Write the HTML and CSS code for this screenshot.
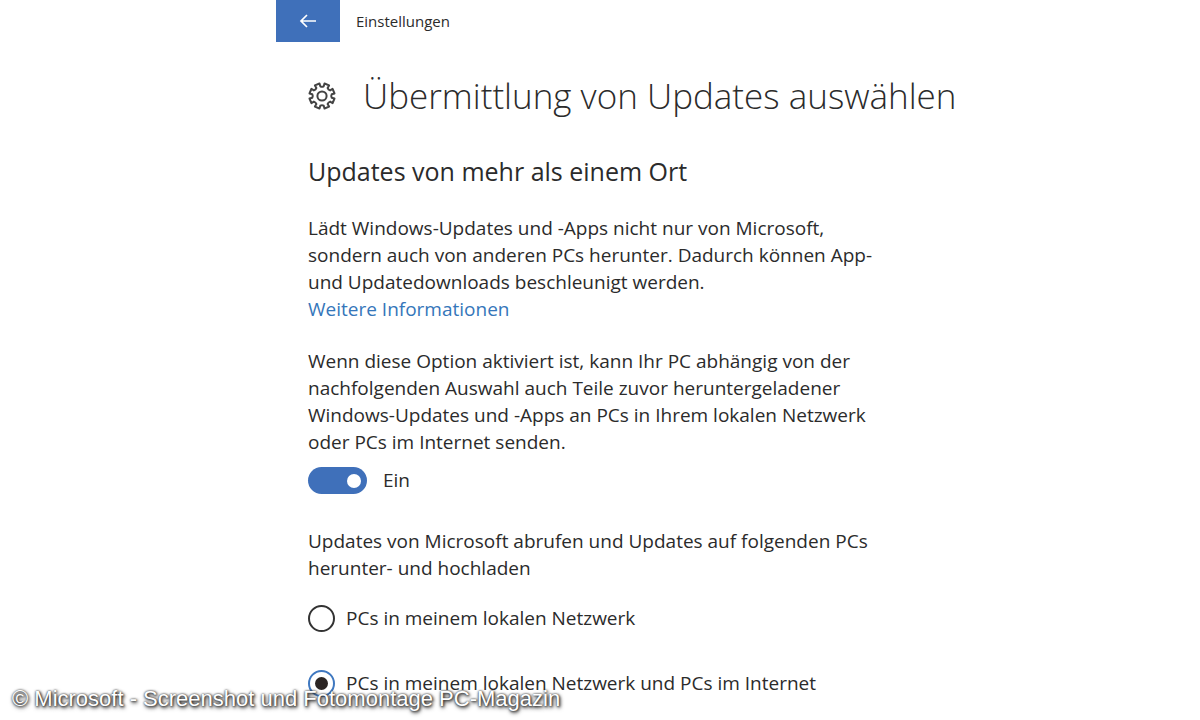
FILE: index.html
```html
<!DOCTYPE html>
<html lang="de">
<head>
<meta charset="utf-8">
<title>Einstellungen</title>
<link rel="stylesheet" href="styles.css">
</head>
<body>
<div class="window">
  <header class="titlebar">
    <button class="back" type="button" aria-label="Zurück">
      <svg width="18" height="16" viewBox="0 0 18 16" fill="none" stroke="currentColor" stroke-width="1.7"><path d="M17 8H2M8 2L2 8l6 6"/></svg>
    </button>
    <span class="app-name">Einstellungen</span>
  </header>
  <main class="content">
    <div class="heading">
      <svg class="gear" width="28" height="28" viewBox="0 0 28 28" fill="none" stroke="currentColor" stroke-width="2" stroke-linejoin="round"><path d="M11.5 1.5L12.3 4.3Q14 5.2 15.7 4.3L16.5 1.5L21.1 3.4L19.6 5.9Q20.2 7.8 22.1 8.4L24.6 6.9L26.5 11.5L23.7 12.3Q22.8 14 23.7 15.7L26.5 16.5L24.6 21.1L22.1 19.6Q20.2 20.2 19.6 22.1L21.1 24.6L16.5 26.5L15.7 23.7Q14 22.8 12.3 23.7L11.5 26.5L6.9 24.6L8.4 22.1Q7.8 20.2 5.9 19.6L3.4 21.1L1.5 16.5L4.3 15.7Q5.2 14 4.3 12.3L1.5 11.5L3.4 6.9L5.9 8.4Q7.8 7.8 8.4 5.9L6.9 3.4Z"/><circle cx="14" cy="14" r="4.6"/></svg>
      <h1>Übermittlung von Updates auswählen</h1>
    </div>
    <h2>Updates von mehr als einem Ort</h2>
    <p>Lädt Windows-Updates und -Apps nicht nur von Microsoft,<br>sondern auch von anderen PCs herunter. Dadurch können App-<br>und Updatedownloads beschleunigt werden.<br><a href="#info">Weitere Informationen</a></p>
    <p class="option-text">Wenn diese Option aktiviert ist, kann Ihr PC abhängig von der<br>nachfolgenden Auswahl auch Teile zuvor heruntergeladener<br>Windows-Updates und -Apps an PCs in Ihrem lokalen Netzwerk<br>oder PCs im Internet senden.</p>
    <label class="switch"><input type="checkbox" role="switch" checked><span>Ein</span></label>
    <fieldset>
      <legend>Updates von Microsoft abrufen und Updates auf folgenden PCs<br>herunter- und hochladen</legend>
      <label class="choice"><input type="radio" name="source"><span>PCs in meinem lokalen Netzwerk</span></label>
      <label class="choice"><input type="radio" name="source" checked><span>PCs in meinem lokalen Netzwerk und PCs im Internet</span></label>
    </fieldset>
  </main>
</div>
<footer class="credit">© Microsoft - Screenshot und Fotomontage PC-Magazin</footer>
</body>
</html>
```
FILE: styles.css
```css
* { box-sizing: border-box; }
html, body { height: 100%; }
body {
  margin: 0;
  overflow: hidden;
  background: #fff;
  color: #2b2b2b;
  font: 19px/27px "Open Sans", "Noto Sans", sans-serif;
}
.window { margin-left: 23%; }
.titlebar { display: flex; align-items: center; gap: 16px; height: 42px; }
.back {
  display: grid;
  place-items: center;
  width: 64px;
  height: 42px;
  padding: 0;
  border: 0;
  background: #3f70ba;
  color: #fff;
}
.app-name { font-size: 15px; }
.content { padding: 28px 32px 0; }
.heading { display: flex; align-items: center; gap: 27px; }
.gear { flex: none; color: #444; }
h1, h2, p { margin: 0; font-weight: 400; white-space: nowrap; }
h1 { font-size: 35px; line-height: 52px; font-weight: 340; }
h2 { margin: 31px 0 26px; font-size: 25px; line-height: 36px; }
a { color: #3576ba; text-decoration: none; }
.option-text { margin-top: 25px; }
.switch { display: flex; align-items: center; gap: 16px; margin: 11px 0 34px; }
.switch input {
  appearance: none;
  display: flex;
  align-items: center;
  justify-content: flex-end;
  width: 59px;
  height: 27px;
  margin: 0;
  padding: 6px;
  border-radius: 14px;
  background: #3f70ba;
}
.switch input::before { content: ""; width: 14px; height: 14px; border-radius: 50%; background: #fff; }
fieldset { margin: 0; padding: 0; border: 0; }
legend { padding: 0; white-space: nowrap; }
.choice { display: flex; align-items: center; gap: 11px; height: 27px; margin-top: 23px; white-space: nowrap; }
.choice + .choice { margin-top: 38px; }
.choice input {
  appearance: none;
  flex: none;
  display: grid;
  place-items: center;
  width: 27px;
  height: 27px;
  margin: 0;
  border: 2px solid #333;
  border-radius: 50%;
}
.choice input:checked { border-color: #3f78c0; }
.choice input:checked::before { content: ""; width: 13px; height: 13px; border-radius: 50%; background: #2b2523; }
.credit {
  position: absolute;
  left: 12px;
  bottom: 7px;
  color: #fff;
  font: 22px/28px "Liberation Sans", Arial, sans-serif;
  white-space: nowrap;
  text-shadow: 0 0 2px #333, 1px 1px 3px #222, 1px 2px 4px #555;
}
```
